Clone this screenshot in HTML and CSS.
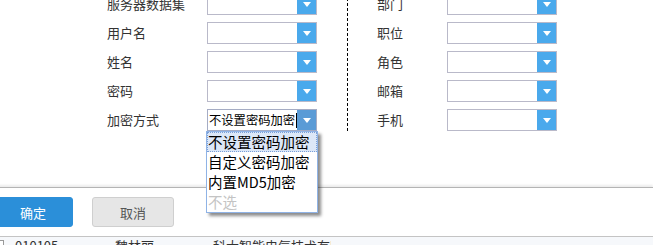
FILE: index.html
```html
<!DOCTYPE html>
<html lang="zh-CN">
<head>
    <meta charset="UTF-8">
    <meta name="viewport" content="width=device-width, initial-scale=1.0">
    <title>用户编辑</title>
    <link rel="stylesheet" href="styles.css">
</head>
<body>
    <div class="form">
        <div class="col col-left">
            <div class="row"><label>服务器数据集</label><div class="select"><span class="value"></span><span class="btn"></span></div></div>
            <div class="row"><label>用户名</label><div class="select"><span class="value"></span><span class="btn"></span></div></div>
            <div class="row"><label>姓名</label><div class="select"><span class="value"></span><span class="btn"></span></div></div>
            <div class="row"><label>密码</label><div class="select"><span class="value"></span><span class="btn"></span></div></div>
            <div class="row"><label>加密方式</label>
                <div class="select focused">
                    <span class="value">不设置密码加密<i class="caret"></i></span><span class="btn"></span>
                    <ul class="options">
                        <li class="active">不设置密码加密</li>
                        <li>自定义密码加密</li>
                        <li>内置MD5加密</li>
                        <li class="muted">不选</li>
                    </ul>
                </div>
            </div>
        </div>
        <div class="divider"></div>
        <div class="col col-right">
            <div class="row"><label>部门</label><div class="select"><span class="value"></span><span class="btn"></span></div></div>
            <div class="row"><label>职位</label><div class="select"><span class="value"></span><span class="btn"></span></div></div>
            <div class="row"><label>角色</label><div class="select"><span class="value"></span><span class="btn"></span></div></div>
            <div class="row"><label>邮箱</label><div class="select"><span class="value"></span><span class="btn"></span></div></div>
            <div class="row"><label>手机</label><div class="select"><span class="value"></span><span class="btn"></span></div></div>
        </div>
    </div>

    <div class="footer">
        <button class="button primary">确定</button>
        <button class="button">取消</button>
    </div>

    <div class="table-row">
        <span class="check"></span>
        <span class="cell code">010105</span>
        <span class="cell name">魏林丽</span>
        <span class="cell org">科大智能电气技术有限公司</span>
    </div>
</body>
</html>
```

FILE: styles.css
```css
* {
    margin: 0;
    padding: 0;
    box-sizing: border-box;
}
body {
    width: 653px;
    height: 245px;
    overflow: hidden;
    background: #fff;
    font-family: "Noto Sans CJK SC", "Noto Sans", sans-serif;
    font-size: 13px;
    color: #333;
}

.form {
    display: flex;
    margin-top: -7px;
    height: 194px;
}
.col {
    display: flex;
    flex-direction: column;
    gap: 7px;
}
.col-left {
    padding-left: 107px;
    width: 347px;
}
.col-left label {
    width: 100px;
}
.divider {
    width: 1px;
    height: 140px;
    background-image: linear-gradient(to bottom, #000 60%, transparent 60%);
    background-size: 1px 5px;
}
.col-right {
    padding-left: 29px;
}
.col-right label {
    width: 70px;
}

.row {
    display: flex;
    align-items: center;
    height: 22px;
}
.row label {
    line-height: 22px;
}

.select {
    position: relative;
    display: flex;
    width: 110px;
    height: 22px;
    border: 1px solid #b9b9c9;
    background: #fff;
}
.select .value {
    flex: 1;
    display: flex;
    align-items: center;
    padding-left: 1px;
    font-size: 12.3px;
    color: #000;
    white-space: nowrap;
    overflow: hidden;
}
.caret {
    display: inline-block;
    width: 1px;
    height: 15px;
    margin-left: 1px;
    background: #000;
}
.select .btn {
    width: 19px;
    flex: none;
    background: #4aa9ec;
    display: flex;
    align-items: center;
    justify-content: center;
}
.select .btn::after {
    content: "";
    border-left: 4px solid transparent;
    border-right: 4px solid transparent;
    border-top: 5px solid #fff;
}
.select.focused {
    border-color: #a5acc4;
}
.select.focused .btn {
    background: #5a9bd6;
}

.options {
    position: absolute;
    top: 21px;
    left: -2px;
    width: 112px;
    list-style: none;
    border: 1px solid #8fb3e6;
    background: #fff;
    box-shadow: 3px 3px 3px rgba(0, 0, 0, 0.45);
    z-index: 10;
}
.options li {
    height: 20px;
    line-height: 20px;
    padding-left: 1px;
    font-size: 14.5px;
    color: #000;
    white-space: nowrap;
}
.options li.active {
    background: #dce7f7;
    outline: 1px dotted #7aa0d8;
    outline-offset: -1px;
}
.options li.muted {
    color: #c4c4c4;
}

.footer {
    display: flex;
    gap: 19px;
    align-items: center;
    height: 50px;
    margin-left: -7px;
    border-top: 1px solid #b4b4b4;
    box-shadow: 0 -2px 2px #ececec;
    border-bottom: 1px solid #c4c4c4;
}
.button {
    width: 80px;
    height: 30px;
    border: 1px solid #cfcfcf;
    border-radius: 3px;
    background: #e6e6e6;
    color: #555;
    font-family: "Noto Sans CJK SC", sans-serif;
    font-size: 13px;
}
.button + .button {
    width: 82px;
}
.button.primary {
    background: #2b8fd9;
    border-color: #2b8fd9;
    color: #fff;
}

.table-row {
    display: flex;
    align-items: flex-start;
    height: 30px;
    background: #f6f8fb;
    font-size: 13px;
    color: #333;
    line-height: 18px;
}
.check {
    width: 10px;
    height: 10px;
    margin: 3px 0 0 -6px;
    border: 1px solid #999;
    background: #fff;
}
.cell {
    white-space: nowrap;
    overflow: hidden;
}
.cell.code {
    margin-left: 11px;
    width: 100px;
}
.cell.name {
    width: 98px;
}
.cell.org {
    width: 118px;
}
```
